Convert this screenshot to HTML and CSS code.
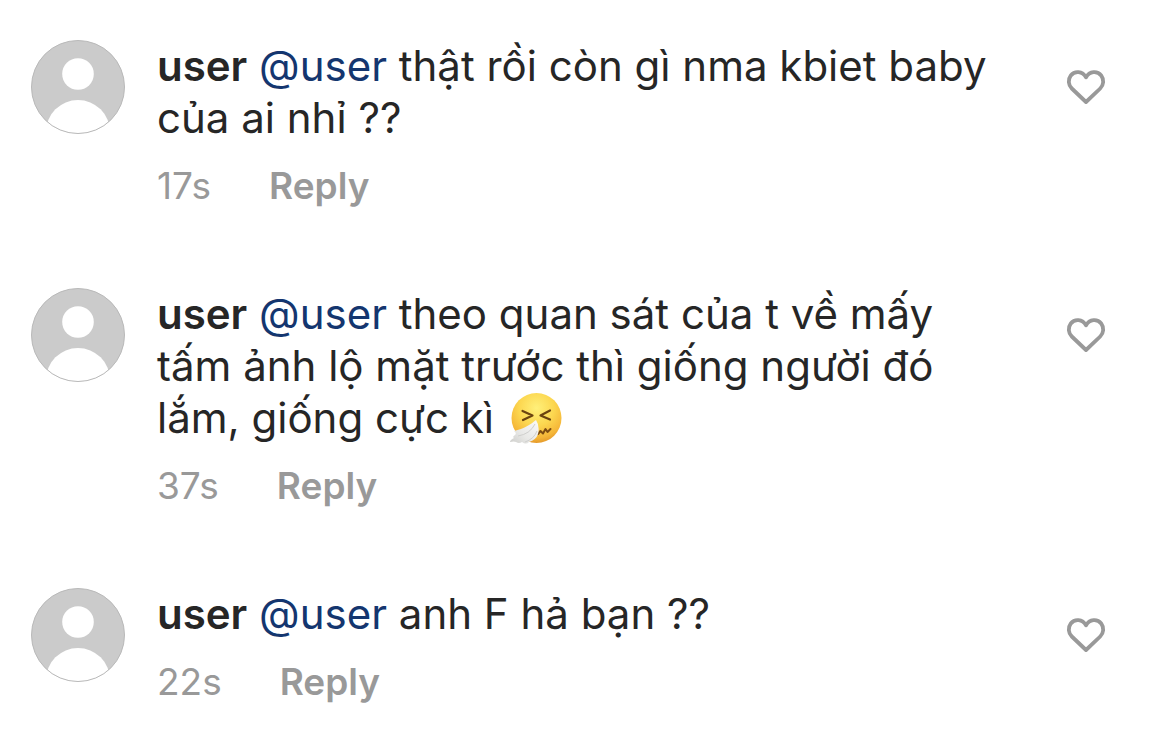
FILE: index.html
```html
<!DOCTYPE html>
<html lang="vi">
<head>
<meta charset="utf-8">
<meta name="viewport" content="width=device-width, initial-scale=1">
<title>Comments</title>
<link rel="stylesheet" href="styles.css">
</head>
<body>
<svg class="defs" aria-hidden="true">
  <symbol id="avatar" viewBox="0 0 94 94">
    <clipPath id="avatar-clip"><circle cx="47" cy="47" r="46.5"/></clipPath>
    <circle cx="47" cy="47" r="46.5" fill="#cbcbcb"/>
    <g clip-path="url(#avatar-clip)" fill="#fff">
      <circle cx="47" cy="34" r="15.8"/>
      <circle cx="47" cy="92" r="32"/>
    </g>
    <circle cx="47" cy="47" r="46.5" fill="none" stroke="#b9b9b9"/>
  </symbol>
  <symbol id="heart" viewBox="0 0 40 36">
    <path d="M20 33 5.800 19.500C2.200 16 1.800 10.500 4.800 6.500 8.500 1.600 16.500 1.800 20 8.300 23.500 1.800 31.500 1.600 35.200 6.500 38.200 10.500 37.800 16 34.200 19.500Z" fill="none" stroke="#999" stroke-width="3.800" stroke-linejoin="round"/>
  </symbol>
</svg>
<main class="comments">
  <article class="comment">
    <svg class="avatar" role="img" aria-label="Avatar"><use href="#avatar"/></svg>
    <div class="body">
      <p class="text"><b class="name">user</b> <a class="mention" href="#">@user</a> thật rồi còn gì nma kbiet baby của ai nhỉ ??</p>
      <div class="meta"><time>17s</time><button class="reply" type="button">Reply</button></div>
    </div>
    <button class="like" type="button" aria-label="Like"><svg class="heart"><use href="#heart"/></svg></button>
  </article>
  <article class="comment">
    <svg class="avatar" role="img" aria-label="Avatar"><use href="#avatar"/></svg>
    <div class="body">
      <p class="text"><b class="name">user</b> <a class="mention" href="#">@user</a> theo quan sát của t về mấy tấm ảnh lộ mặt trước thì giống người đó lắm, giống cực kì <svg class="emoji" viewBox="0 0 52 52" role="img" aria-label="Sneezing face">
        <defs>
          <radialGradient id="face" cx=".5" cy=".3" r=".7"><stop offset="0" stop-color="#fff07a"/><stop offset=".5" stop-color="#fcd750"/><stop offset=".85" stop-color="#f5b638"/><stop offset="1" stop-color="#e59a2b"/></radialGradient>
          <linearGradient id="tissue" x1="1" y1="0" x2="0" y2="1"><stop offset="0" stop-color="#fafafa"/><stop offset=".6" stop-color="#e8e8e6"/><stop offset="1" stop-color="#cdcdca"/></linearGradient>
        </defs>
        <circle cx="26.500" cy="26" r="25" fill="url(#face)"/>
        <path d="M12.500 19 22.500 23.500 13 28M40 18.500 30.500 23.500 40 27.500" fill="none" stroke="#6b4410" stroke-width="2.200" stroke-linecap="round" stroke-linejoin="round"/>
        <path d="M28 42l2.500-3 2.500 2.500 2.500-4.500 2 3 3-3" fill="none" stroke="#7d4c12" stroke-width="2" stroke-linecap="round" stroke-linejoin="round"/>
        <path d="M26 28C21 32 14 37 4 39Q7 41 5 43 2 45 4 46 0 48 0 50 4 49 6 50 9 52 12 50 16 53 19 50 26 48 28 42 30 34 26 28Z" fill="url(#tissue)"/>
        <path d="M25 32Q20 42 8 44M27 39Q24 47 15 50" fill="none" stroke="#cfcfcd" stroke-width="1"/>
      </svg></p>
      <div class="meta"><time>37s</time><button class="reply" type="button">Reply</button></div>
    </div>
    <button class="like" type="button" aria-label="Like"><svg class="heart"><use href="#heart"/></svg></button>
  </article>
  <article class="comment">
    <svg class="avatar" role="img" aria-label="Avatar"><use href="#avatar"/></svg>
    <div class="body">
      <p class="text"><b class="name">user</b> <a class="mention" href="#">@user</a> anh F hả bạn ??</p>
      <div class="meta"><time>22s</time><button class="reply" type="button">Reply</button></div>
    </div>
    <button class="like" type="button" aria-label="Like"><svg class="heart"><use href="#heart"/></svg></button>
  </article>
</main>
</body>
</html>
```
FILE: styles.css
```css
* {
  box-sizing: border-box;
}

body {
  margin: 0;
  background: #fff;
  color: #262626;
  font-family: Inter, "Liberation Sans", sans-serif;
}

button {
  padding: 0;
  border: 0;
  background: none;
  color: inherit;
  font: inherit;
  cursor: pointer;
}

.defs {
  position: absolute;
  width: 0;
  height: 0;
}

.comments {
  display: flex;
  flex-direction: column;
  gap: 80px;
  padding: 40px 64px 36px 31px;
}

.comment {
  display: flex;
  align-items: flex-start;
}

.avatar {
  flex: none;
  width: 94px;
  height: 94px;
  margin-right: 32px;
}

.body {
  flex: 1;
  min-width: 0;
}

.text {
  margin: 0;
  font-size: 42px;
  line-height: 52px;
}

.name {
  font-weight: 600;
}

.mention {
  color: #14366f;
  text-decoration: none;
}

.emoji {
  width: 52px;
  height: 52px;
  margin-left: 4px;
  vertical-align: bottom;
}

.meta {
  display: flex;
  gap: 58px;
  margin-top: 20px;
  color: #999;
  font-size: 37px;
  line-height: 44px;
}

.reply {
  font-weight: 600;
}

.like {
  flex: none;
  margin: 29px 0 0 66px;
}

.heart {
  display: block;
  width: 40px;
  height: 36px;
}
```
